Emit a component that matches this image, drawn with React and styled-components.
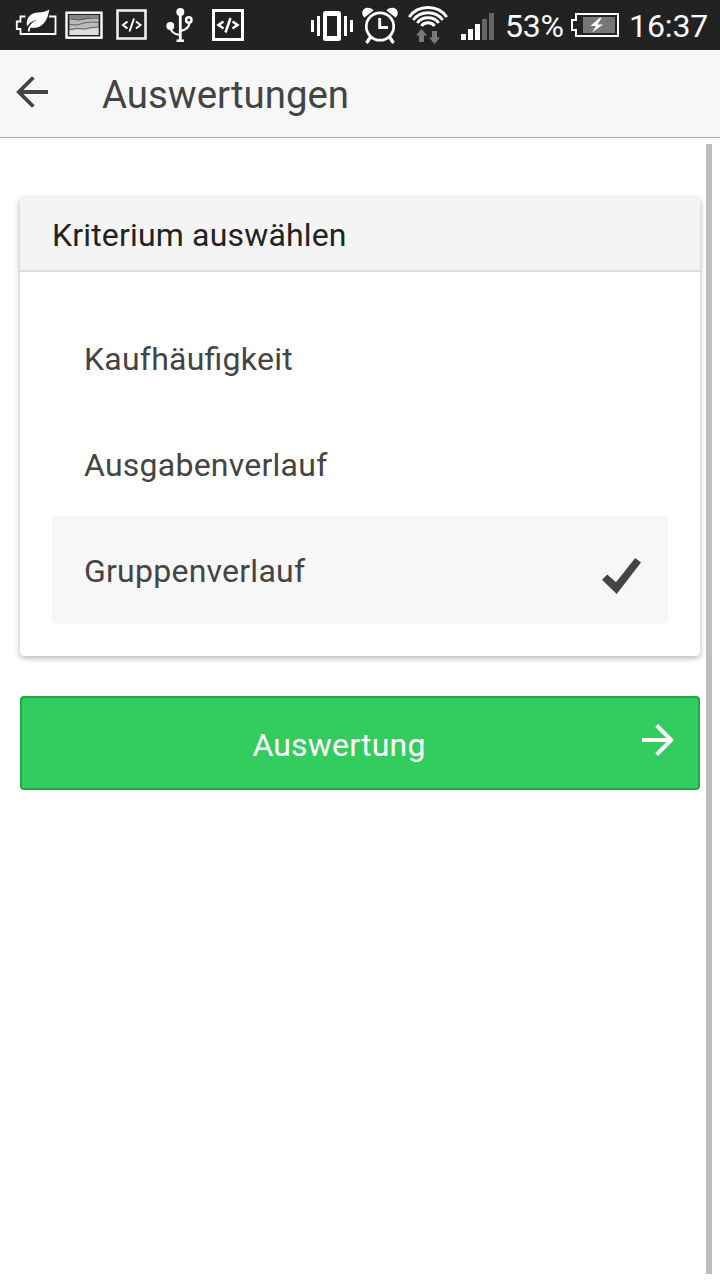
import React from 'react';
import styled, { createGlobalStyle } from 'styled-components';

const GlobalStyle = createGlobalStyle`
  * { box-sizing: border-box; }
  body {
    margin: 0;
    background: #fff;
    font-family: Roboto, "Liberation Sans", sans-serif;
    font-feature-settings: "liga" 1;
    color: #444;
  }
`;

const Screen = styled.div`
  position: relative;
  display: flex;
  flex-direction: column;
  width: 720px;
  height: 1280px;
  overflow: hidden;
  background: #fff;
`;

const StatusBar = styled.div`
  display: flex;
  flex: none;
  justify-content: space-between;
  height: 50px;
  padding: 0 11px 0 15px;
  background: #222;
  color: #fff;
`;

const StatusGroup = styled.div`
  display: flex;
  align-items: center;
`;

const Gap = styled.span`
  flex: none;
  width: ${(p) => p.$w}px;
`;

const StatusIcon = styled.svg`
  display: block;
  flex: none;
  height: 50px;
`;

const StatusText = styled.span`
  width: ${(p) => p.$width}px;
  font-size: 32px;
  line-height: 50px;
  padding-top: 1px;
  letter-spacing: ${(p) => p.$spacing}px;
  white-space: nowrap;
`;

const Header = styled.header`
  display: flex;
  flex: none;
  align-items: center;
  height: 88px;
  padding-left: 16px;
  gap: 53px;
  background: #f7f7f7;
  border-bottom: 1px solid #b2b2b2;
`;

const BackButton = styled.button`
  display: block;
  padding: 0;
  margin-top: -3px;
  border: 0;
  background: none;
  svg { display: block; }
`;

const Title = styled.h1`
  margin: 2px 0 0;
  font-size: 38.4px;
  font-weight: 400;
  color: #444;
`;

const Content = styled.main`
  display: flex;
  flex-direction: column;
  gap: 40px;
  padding: 60px 20px 0;
`;

const Card = styled.section`
  height: 458px;
  border-radius: 4px;
  background: #fff;
  box-shadow: 0 2px 6px rgba(0, 0, 0, 0.3);
  overflow: hidden;
`;

const CardHeader = styled.h2`
  height: 74px;
  margin: 0;
  padding: 0 32px;
  border-bottom: 2px solid #ddd;
  background: #f4f4f4;
  color: #222;
  font-size: 32px;
  font-weight: 400;
  line-height: 74px;
  letter-spacing: 0.17px;
`;

const Options = styled.ul`
  display: flex;
  flex-direction: column;
  margin: 0;
  padding: 32px;
  list-style: none;
`;

const Option = styled.li`
  display: flex;
  align-items: flex-start;
  justify-content: space-between;
  height: ${(p) => (p.$selected ? 108 : 106)}px;
  padding: 35px 26px 0 32px;
  border-radius: 6px;
  background: ${(p) => (p.$selected ? '#f7f7f7' : 'transparent')};
  font-size: 32px;
  letter-spacing: 0.24px;
  svg { margin-top: 7px; }
`;

const OptionLabel = styled.span`
  line-height: 40px;
`;

const SubmitButton = styled.button`
  display: flex;
  align-items: center;
  height: 94px;
  padding: 0 23px 0 0;
  border: 2px solid #28a54c;
  border-radius: 4px;
  background: #33cd5f;
  color: #fff;
  font: inherit;
  font-size: 32px;
  letter-spacing: 0.2px;
  svg { margin-bottom: 6px; }
`;

const SubmitLabel = styled.span`
  flex: 1;
  padding: 4px 0 0 14px;
  text-align: center;
`;

const Scrollbar = styled.div`
  position: absolute;
  top: 144px;
  right: 8px;
  width: 6px;
  height: 1130px;
  background: #bdbdbd;
`;

const EcoBattery = () => (
  <StatusIcon width="42" viewBox="15 0 42 50" fill="none">
    <path d="M25.500 16.500H20.500V21.500H16.800V29H20.500V34H55.500V16.500H49" stroke="#fff" strokeWidth="1.800" />
    <path d="M28 31.500C27.500 28 30 23.500 37 19.500C31 21.500 28.500 24 27 26.500C25.500 17 31 13 38 12.500C43 12.200 46 11.500 49.200 9.500C48 18.500 44.500 25 38 27.200C34 28.500 31.500 27 30.300 28.200C29.700 29 30 30.500 29.600 31.500Z" fill="#fff" />
  </StatusIcon>
);

const Picture = () => (
  <StatusIcon width="38" viewBox="65 0 38 50">
    <rect x="66.500" y="12.700" width="35" height="25" fill="none" stroke="#fff" strokeWidth="2.400" />
    <rect x="69.500" y="15" width="29" height="20" fill="#bbb" />
    <path d="M69.500 15H98.500V18L92 17.500L86 19L79 20L69.500 18.500Z" fill="#858585" />
    <path d="M69.500 19L78 20L88 18.500L98.500 18M69.500 24.500L77 25L84 23L91 22L98.500 22.500M69.500 29.500L77 28.500L85 29L92 27.500L98.500 27" fill="none" stroke="#555" strokeWidth="0.900" />
    <path d="M69.500 30.500L77 29.500L85 30L92 28.500L98.500 28V35H69.500Z" fill="#ddd" />
  </StatusIcon>
);

const CodeBox = ({ bold }) => (
  <StatusIcon width="32" viewBox="0 0 32 50" fill="none" stroke="#fff">
    <rect x="1.500" y="10.500" width={bold ? 29 : 28} height={bold ? 29 : 28} strokeWidth={bold ? 3 : 2.600} stroke={bold ? '#fff' : '#eee'} />
    <path
      d={bold
        ? 'M11.500 21.500L6.500 25L11.500 28.500M20.500 21.500L25.500 25L20.500 28.500M18.500 18L13.500 32.500'
        : 'M11.500 21.500L7 25L11.500 28.500M20 21.500L24.500 25L20 28.500M18 18.500L13.500 31.500'}
      strokeWidth={bold ? 2.500 : 2}
    />
  </StatusIcon>
);

const Usb = () => (
  <StatusIcon width="28" viewBox="166 0 28 50" fill="none" stroke="#fff">
    <path d="M180.300 12V41" strokeWidth="2.800" />
    <path d="M170.500 27C171 32 174 34.500 180 35M189.500 22C189.500 27 186 30 180 31" strokeWidth="2.200" />
    <circle cx="180.300" cy="12" r="4" fill="#fff" stroke="none" />
    <circle cx="170.300" cy="26" r="4" fill="#fff" stroke="none" />
    <circle cx="188.800" cy="20" r="2.700" strokeWidth="2.500" fill="#222" />
    <path d="M176.500 40.700H184" strokeWidth="2.500" />
  </StatusIcon>
);

const Vibrate = () => (
  <StatusIcon width="42" viewBox="311 0 42 50" fill="none" stroke="#fff">
    <path d="M312.500 20V32M318.500 16V36M345.500 16V36M351.500 20V32" strokeWidth="3" />
    <path fill="#fff" stroke="none" fillRule="evenodd" d="M325.500 11H338.500Q341 11 341 13.500V38.500Q341 41 338.500 41H325.500Q323 41 323 38.500V13.500Q323 11 325.500 11ZM327 16V36H337V16Z" />
  </StatusIcon>
);

const Alarm = () => (
  <StatusIcon width="36" viewBox="362 0 36 50" fill="none" stroke="#fff">
    <circle cx="380" cy="26.500" r="13.700" strokeWidth="2.700" />
    <path d="M379.700 18V27.500H388" strokeWidth="2.900" />
    <path d="M370.500 37L366.500 43M389.500 37L393.500 43" strokeWidth="3.200" />
    <path d="M364.500 17.500C361 15 361.500 9.500 366 8C369 7.300 372 8.300 373.500 10.500ZM395.500 17.500C399 15 398.500 9.500 394 8C391 7.300 388 8.300 386.500 10.500Z" fill="#fff" stroke="none" />
  </StatusIcon>
);

const Wifi = () => (
  <StatusIcon width="41" viewBox="408 0 41 50" fill="none" stroke="#fff">
    <path d="M409.200 17C418 4.300 438 4.300 446.800 17M413.300 20C420 10.300 436 10.300 442.700 20M417.300 23C422 16 434 16 438.700 23M421.500 26C424 21.700 432 21.700 434.500 26" strokeWidth="2.900" />
    <path d="M421.500 29L427 35.500H424V42H419V35.500H416ZM434.500 44L440 37.500H437V31H432V37.500H429Z" fill="#7a7a7a" stroke="none" />
  </StatusIcon>
);

const Signal = () => (
  <StatusIcon width="33" viewBox="461 0 33 50" fill="#fff">
    <path d="M461 34H466V40H461ZM468 29H473V40H468ZM475 24H480V40H475Z" />
    <path d="M482 19H487V40H482ZM489 13H494V40H489Z" fill="#666" />
  </StatusIcon>
);

const Battery = () => (
  <StatusIcon width="48" viewBox="571 0 48 50">
    <path d="M576 14H618V36H576V30H572V20H576Z" fill="none" stroke="#fff" strokeWidth="2" />
    <rect x="583" y="17" width="32" height="16" fill="#777" />
    <path d="M600 17.500L590.500 26H596L592 32.500L603 24.500H597.500L601.500 18Z" fill="#fff" />
  </StatusIcon>
);

const BackArrow = () => (
  <svg width="33" height="32" viewBox="16 76 33 32" fill="none" stroke="#444" strokeWidth="3.800">
    <path d="M48 92H19M33.300 77.500L18.800 92L33.300 106.500" />
  </svg>
);

const Check = () => (
  <svg width="40" height="37" viewBox="602 558 40 37">
    <path d="M602 579.700L607.300 574.500L616 582.300L635.200 558L641 562.500L616.700 594Z" fill="#444" />
  </svg>
);

const ForwardArrow = () => (
  <svg width="33" height="32" viewBox="642 724 33 32" fill="none" stroke="#fff" strokeWidth="4">
    <path d="M642 740H671M656.700 725.500L671.200 740L656.700 754.500" />
  </svg>
);

const criteria = ['Kaufhäufigkeit', 'Ausgabenverlauf', 'Gruppenverlauf'];

export default function App() {
  const selected = 'Gruppenverlauf';
  return (
    <>
      <GlobalStyle />
      <Screen>
        <StatusBar>
          <StatusGroup>
            <EcoBattery />
            <Gap $w={8} />
            <Picture />
            <Gap $w={13} />
            <CodeBox />
            <Gap $w={18} />
            <Usb />
            <Gap $w={18} />
            <CodeBox bold />
          </StatusGroup>
          <StatusGroup>
            <Vibrate />
            <Gap $w={9} />
            <Alarm />
            <Gap $w={10} />
            <Wifi />
            <Gap $w={12} />
            <Signal />
            <Gap $w={11} />
            <StatusText $width={57} $spacing={-0.2}>53%</StatusText>
            <Gap $w={9} />
            <Battery />
            <Gap $w={10} />
            <StatusText $width={80} $spacing={-0.1}>16:37</StatusText>
          </StatusGroup>
        </StatusBar>
        <Header>
          <BackButton aria-label="Zurück">
            <BackArrow />
          </BackButton>
          <Title>Auswertungen</Title>
        </Header>
        <Content>
          <Card>
            <CardHeader>Kriterium auswählen</CardHeader>
            <Options>
              {criteria.map((name) => (
                <Option key={name} $selected={name === selected}>
                  <OptionLabel>{name}</OptionLabel>
                  {name === selected && <Check />}
                </Option>
              ))}
            </Options>
          </Card>
          <SubmitButton>
            <SubmitLabel>Auswertung</SubmitLabel>
            <ForwardArrow />
          </SubmitButton>
        </Content>
        <Scrollbar />
      </Screen>
    </>
  );
}
